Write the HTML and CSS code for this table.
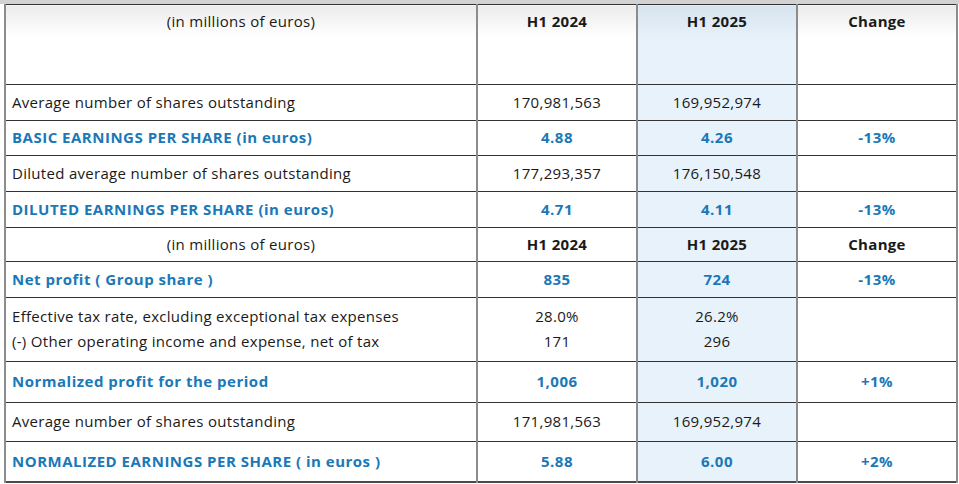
FILE: index.html
```html
<!DOCTYPE html>
<html lang="en">
<head>
<meta charset="utf-8">
<link rel="stylesheet" href="styles.css">
</head>
<body>
<div class="topband"></div>
<table class="eps">
  <colgroup>
    <col class="c-label">
    <col class="c-num">
    <col class="c-num">
    <col class="c-num">
  </colgroup>
  <tr class="head tall">
    <th class="unit">(in millions of euros)</th>
    <th>H1 2024</th>
    <th class="hl">H1 2025</th>
    <th>Change</th>
  </tr>
  <tr class="r36">
    <td class="label">Average number of shares outstanding</td>
    <td>170,981,563</td>
    <td class="hl">169,952,974</td>
    <td></td>
  </tr>
  <tr class="r35 key">
    <td class="label">BASIC EARNINGS PER SHARE (in euros)</td>
    <td>4.88</td>
    <td class="hl">4.26</td>
    <td>-13%</td>
  </tr>
  <tr class="r36">
    <td class="label">Diluted average number of shares outstanding</td>
    <td>177,293,357</td>
    <td class="hl">176,150,548</td>
    <td></td>
  </tr>
  <tr class="r36 key">
    <td class="label">DILUTED EARNINGS PER SHARE (in euros)</td>
    <td>4.71</td>
    <td class="hl">4.11</td>
    <td>-13%</td>
  </tr>
  <tr class="subhead r34">
    <td class="unit">(in millions of euros)</td>
    <td>H1 2024</td>
    <td class="hl">H1 2025</td>
    <td>Change</td>
  </tr>
  <tr class="r36 key">
    <td class="label">Net profit ( Group share )</td>
    <td>835</td>
    <td class="hl">724</td>
    <td>-13%</td>
  </tr>
  <tr class="r64 double">
    <td class="label">Effective tax rate, excluding exceptional tax expenses<br>(-) Other operating income and expense, net of tax</td>
    <td>28.0%<br>171</td>
    <td class="hl">26.2%<br>296</td>
    <td></td>
  </tr>
  <tr class="r41 key">
    <td class="label">Normalized profit for the period</td>
    <td>1,006</td>
    <td class="hl">1,020</td>
    <td>+1%</td>
  </tr>
  <tr class="r39">
    <td class="label">Average number of shares outstanding</td>
    <td>171,981,563</td>
    <td class="hl">169,952,974</td>
    <td></td>
  </tr>
  <tr class="r40 key">
    <td class="label">NORMALIZED EARNINGS PER SHARE ( in euros )</td>
    <td>5.88</td>
    <td class="hl">6.00</td>
    <td>+2%</td>
  </tr>
</table>
</body>
</html>
```
FILE: styles.css
```css
html, body {
  margin: 0;
  padding: 0;
  background: #ffffff;
}
body {
  font-family: "Open Sans", "Noto Sans", "DejaVu Sans", sans-serif;
  font-size: 15px;
  letter-spacing: 0.3px;
  color: #1a1a1a;
}
.topband {
  height: 4px;
  background: #d2d2d2;
}
.eps {
  margin-left: 4px;
  width: 953px;
  border-collapse: collapse;
  table-layout: fixed;
  border-left: 2px solid #3a3a3a;
  border-right: 2px solid #808080;
  border-bottom: 2px solid #4a4a4a;
  border-top: 1px solid #9a9a9a;
}
.c-label { width: 472px; }
.c-num { width: 160px; }
.eps td, .eps th {
  padding: 0 6px 2px;
  text-align: center;
  border-top: 1px solid #333;
  border-bottom: 1px solid #333;
  border-left: 2px solid #8c8c8c;
  border-right: 2px solid #8c8c8c;
  line-height: 20px;
}
.eps td.label {
  text-align: left;
}
.head th {
  vertical-align: top;
  padding-top: 6px;
  height: 71px;
  font-weight: 700;
  background: linear-gradient(#ebebeb, #ffffff 40%);
}
.head th.unit { font-weight: 400; }
.head th.hl {
  background: linear-gradient(#d6e3ee, #e8f2fb 45%);
}
.hl { background: #e8f2fb; }
.subhead td { font-weight: 700; }
.subhead td.unit { font-weight: 400; }
.key td {
  color: #1b78b7;
  font-weight: 700;
  letter-spacing: 0.5px;
}
.double td { line-height: 25px; }
.r34 td { height: 31px; }
.r35 td { height: 32px; }
.r36 td { height: 33px; }
.r39 td { height: 36px; }
.r40 td { height: 37px; }
.r41 td { height: 38px; }
.r64 td { height: 61px; }
```
